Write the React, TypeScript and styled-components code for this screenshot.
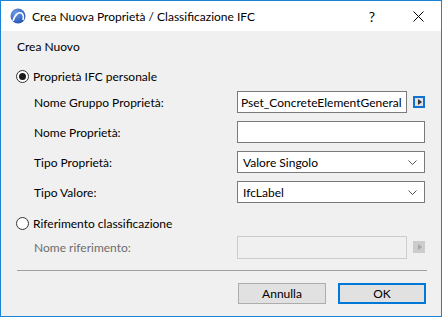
import styled, { createGlobalStyle } from "styled-components";

const Global = createGlobalStyle`
  html, body { margin: 0; padding: 0; background: #ffffff; }
  body { font-family: Lato, "Noto Sans", sans-serif; font-size: 12px; color: #000; }
  * { box-sizing: border-box; }
`;

const Window = styled.div`
  width: 442px;
  height: 317px;
  border: 1px solid #1883d7;
  display: flex;
  flex-direction: column;
  background: #f0f0f0;
`;

const TitleBar = styled.div`
  height: 30px;
  background: #fff;
  display: flex;
  align-items: center;
  padding-left: 9px;
  flex-shrink: 0;
`;

const Title = styled.div`
  margin-left: 6px;
  flex: 1;
  font-size: 12px;
  color: #000;
`;

const TitleButton = styled.div<{ w: number }>`
  width: ${(p) => p.w}px;
  height: 30px;
  display: flex;
  align-items: center;
  justify-content: center;
  font-size: 14px;
`;

const Body = styled.div`
  flex: 1;
  padding: 8px 16px 0 15px;
  display: flex;
  flex-direction: column;
`;

const Heading = styled.div`
  height: 16px;
  line-height: 16px;
  padding-left: 1px;
`;

const RadioRow = styled.label<{ top: number }>`
  margin-top: ${(p) => p.top}px;
  height: 16px;
  display: flex;
  align-items: center;
  gap: 4px;
`;

const RadioCircle = styled.span<{ checked?: boolean }>`
  width: 13px;
  height: 13px;
  border-radius: 50%;
  border: 1px solid #333;
  background: #fff;
  display: flex;
  align-items: center;
  justify-content: center;
  &::after {
    content: "";
    width: 7px;
    height: 7px;
    border-radius: 50%;
    background: ${(p) => (p.checked ? "#1a1a1a" : "transparent")};
  }
`;

const Fields = styled.div<{ top: number }>`
  margin-top: ${(p) => p.top}px;
  display: grid;
  grid-template-columns: 203px 170px 18px;
  grid-auto-rows: 22px;
  row-gap: 8px;
  padding-left: 18px;
`;

const Label = styled.div<{ disabled?: boolean }>`
  display: flex;
  align-items: center;
  color: ${(p) => (p.disabled ? "#6d6d6d" : "#000")};
`;

const TextBox = styled.div<{ wide?: boolean; disabled?: boolean }>`
  grid-column: ${(p) => (p.wide ? "2 / span 2" : "2")};
  border: 1px solid ${(p) => (p.disabled ? "#cccccc" : "#7a7a7a")};
  background: ${(p) => (p.disabled ? "#f0f0f0" : "#fff")};
  display: flex;
  align-items: center;
  padding-left: 3px;
  white-space: nowrap;
  overflow: hidden;
`;

const Select = styled.div`
  grid-column: 2 / span 2;
  border: 1px solid #7a7a7a;
  background: #fff;
  display: flex;
  align-items: center;
  justify-content: space-between;
  padding: 0 7px 0 5px;
`;

const ArrowButton = styled.div<{ disabled?: boolean }>`
  align-self: center;
  justify-self: end;
  width: 12px;
  height: 12px;
  border: ${(p) => (p.disabled ? "none" : "2px solid #1172d3")};
  background: ${(p) => (p.disabled ? "#cccccc" : "#e1e1e1")};
  display: flex;
  align-items: center;
  justify-content: center;
  &::after {
    content: "";
    width: 0;
    height: 0;
    border-top: 3px solid transparent;
    border-bottom: 3px solid transparent;
    border-left: 4px solid ${(p) => (p.disabled ? "#a6a6a6" : "#333")};
    margin-left: 1px;
  }
`;

const Separator = styled.div`
  margin-top: 12px;
  height: 1px;
  background: #a0a0a0;
  margin-left: 1px;
  margin-right: -2px;
`;

const Footer = styled.div`
  margin-top: 12px;
  display: flex;
  justify-content: flex-end;
  gap: 12px;
  margin-right: -1px;
`;

const Button = styled.div<{ primary?: boolean }>`
  width: 88px;
  height: 21px;
  background: #e1e1e1;
  border: ${(p) => (p.primary ? "2px solid #0078d7" : "1px solid #adadad")};
  display: flex;
  align-items: center;
  justify-content: center;
`;

const Chevron = () => (
  <svg width="9" height="5" viewBox="0 0 9 5">
    <path d="M0.5 0.5 L4.5 4.5 L8.5 0.5" fill="none" stroke="#555" strokeWidth="1" />
  </svg>
);

const Logo = () => (
  <svg width="16" height="16" viewBox="0 0 16 16">
    <defs>
      <radialGradient id="lg" cx="0.35" cy="0.3" r="0.8">
        <stop offset="0" stopColor="#6f9ce6" />
        <stop offset="1" stopColor="#1d4fb0" />
      </radialGradient>
    </defs>
    <circle cx="8" cy="8" r="7.5" fill="url(#lg)" />
    <path d="M3 13 C5 6 9 3.5 12 5.5 C13.5 7 13.5 10 13 12" fill="none" stroke="#fff" strokeWidth="1.6" />
  </svg>
);

export default function App() {
  return (
    <>
      <Global />
      <Window>
        <TitleBar>
          <Logo />
          <Title>Crea Nuova Proprietà / Classificazione IFC</Title>
          <TitleButton w={46}>?</TitleButton>
          <TitleButton w={46}>
            <svg width="11" height="11" viewBox="0 0 11 11">
              <path d="M0.5 0.5 L10.5 10.5 M10.5 0.5 L0.5 10.5" stroke="#000" strokeWidth="1" />
            </svg>
          </TitleButton>
        </TitleBar>
        <Body>
          <Heading>Crea Nuovo</Heading>
          <RadioRow top={13}>
            <RadioCircle checked />
            Proprietà IFC personale
          </RadioRow>
          <Fields top={7}>
            <Label>Nome Gruppo Proprietà:</Label>
            <TextBox>Pset_ConcreteElementGeneral</TextBox>
            <ArrowButton />
            <Label>Nome Proprietà:</Label>
            <TextBox wide />
            <Label>Tipo Proprietà:</Label>
            <Select>
              Valore Singolo
              <Chevron />
            </Select>
            <Label>Tipo Valore:</Label>
            <Select>
              IfcLabel
              <Chevron />
            </Select>
          </Fields>
          <RadioRow top={12}>
            <RadioCircle />
            Riferimento classificazione
          </RadioRow>
          <Fields top={5}>
            <Label disabled>Nome riferimento:</Label>
            <TextBox disabled style={{ height: 23 }} />
            <ArrowButton disabled />
          </Fields>
          <Separator />
          <Footer>
            <Button>Annulla</Button>
            <Button primary>OK</Button>
          </Footer>
        </Body>
      </Window>
    </>
  );
}
